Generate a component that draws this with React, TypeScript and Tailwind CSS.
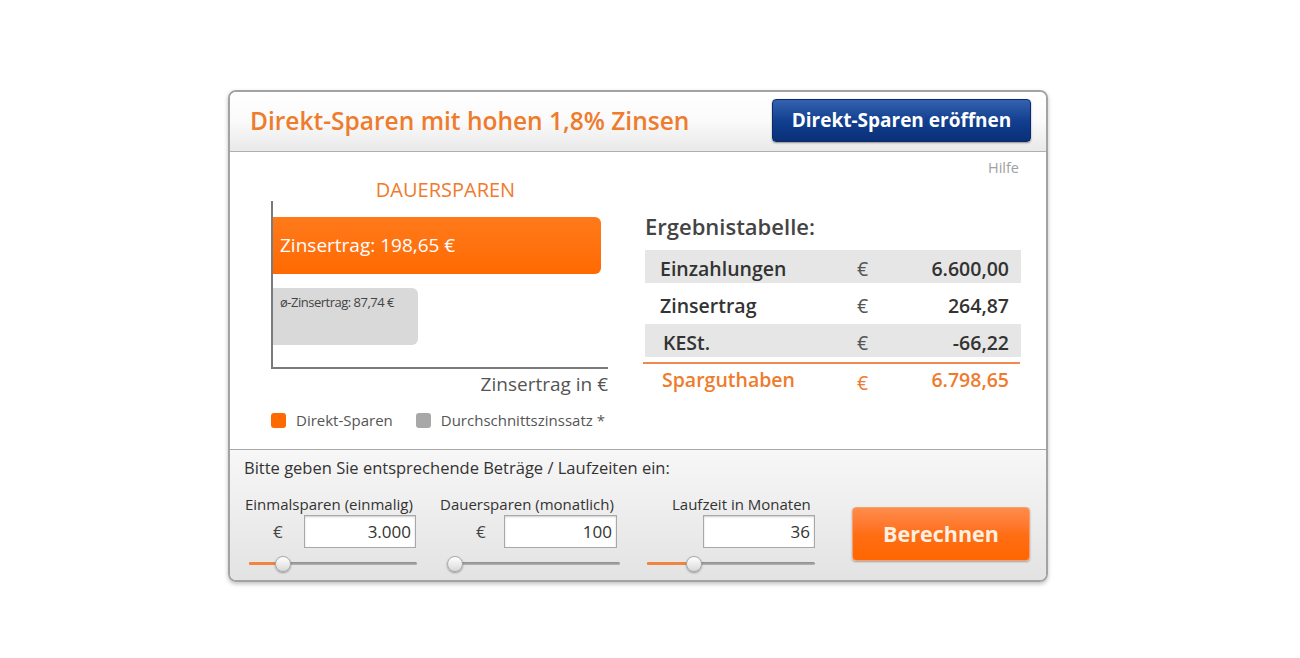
import React from "react";

function Slider({ width, pos, orange }: { width: number; pos: number; orange: boolean }) {
  return (
    <div className="relative h-[16px]" style={{ width }}>
      <div className="absolute left-0 right-0 top-[6px] h-[3px] rounded-full bg-gradient-to-b from-[#8c8c8c] to-[#b5b5b5]" />
      {orange && (
        <div className="absolute left-0 top-[6px] h-[3px] rounded-l-full bg-[#f3843e]" style={{ width: pos }} />
      )}
      <div
        className="absolute top-0 h-[16px] w-[16px] rounded-full border border-[#a9a9a9] bg-gradient-to-b from-white to-[#d9d9d9] shadow-[0_1px_2px_rgba(0,0,0,0.35)]"
        style={{ left: pos - 8 }}
      />
    </div>
  );
}

function Row({ label, value, grey, h, pl = "pl-[15px]" }: { label: string; value: string; grey: boolean; h: string; pl?: string }) {
  return (
    <div className={`flex items-center pt-[5px] ${h} ${grey ? "bg-[#e6e6e6]" : "bg-white"} text-[19.5px] font-semibold text-[#333]`}>
      <span className={`w-[212px] ${pl}`}>{label}</span>
      <span className="font-normal text-[#555]">€</span>
      <span className="ml-auto pr-[12px]">{value}</span>
    </div>
  );
}

const inputCls =
  "h-[33px] border border-[#a8a8a8] bg-white pr-[4px] text-right text-[17px] text-[#333] shadow-[inset_0_1px_2px_rgba(0,0,0,0.2)] outline-none";

export default function App() {
  return (
    <div className="min-h-[658px] w-[1300px] bg-white pl-[228px] pt-[90px] font-['Open_Sans','Noto_Sans',sans-serif]">
      <div className="w-[820px] h-[492px] overflow-hidden rounded-[8px] border-2 border-[#a3a3a3] shadow-[0_2px_4px_rgba(0,0,0,0.25)] flex flex-col">
        {/* header */}
        <div className="flex h-[60px] shrink-0 items-center border-b border-[#b0b0b0] bg-gradient-to-b from-white via-[#fafafa] to-[#e9e9e9] pl-[20px] pr-[15px]">
          <h1 className="text-[24.5px] font-semibold leading-none text-[#ef7b2c]">Direkt-Sparen mit hohen 1,8% Zinsen</h1>
          <button className="ml-auto mt-[-2px] h-[43px] w-[259px] rounded-[4px] border border-[#0b2a6e] bg-gradient-to-b from-[#3462b0] via-[#123f8f] to-[#0a2f78] text-[19px] font-bold text-white shadow-[0_1px_2px_rgba(0,0,0,0.4)]">
            Direkt-Sparen eröffnen
          </button>
        </div>

        {/* body */}
        <div className="flex h-[298px] shrink-0 border-b border-[#a8a8a8] bg-white">
          <div className="w-[415px] pl-[41px] pt-[27px]">
            <div className="h-[22px] w-[337px] pl-[12px] text-center text-[20px] leading-[22px] text-[#ef7b2c]">
              DAUERSPAREN
            </div>
            <div className="h-[168px] w-[337px] border-b-2 border-l-2 border-[#7a7a7a] pt-[16px]">
              <div className="flex h-[57px] w-[328px] items-center rounded-r-[6px] bg-gradient-to-b from-[#ff7a1a] to-[#ff6a00] pl-[7px] text-[19px] text-white">
                Zinsertrag: 198,65 €
              </div>
              <div className="mt-[14px] h-[57px] w-[145px] rounded-r-[6px] bg-[#d9d9d9] pl-[7px] pt-[5px] text-[13px] tracking-[-0.5px] text-[#444]">
                ø-Zinsertrag: 87,74 €
              </div>
            </div>
            <div className="pt-[4px] w-[337px] text-right text-[19px] leading-[22px] text-[#555]">Zinsertrag in €</div>
            <div className="pt-[14px] flex items-center text-[15px] text-[#555]">
              <span className="h-[15px] w-[15px] rounded-[3px] bg-[#ff6a00]" />
              <span className="ml-[10px]">Direkt-Sparen</span>
              <span className="ml-[23px] h-[15px] w-[15px] rounded-[3px] bg-[#a8a8a8]" />
              <span className="ml-[10px]">Durchschnittszinssatz *</span>
            </div>
          </div>
          <div className="flex-1 pr-[25px]">
            <div className="pt-[8px] pr-[2px] text-right text-[14.5px] leading-[16px] text-[#a0a0a0]">Hilfe</div>
            <div className="mt-[37px] text-[22px] font-semibold leading-[26px] text-[#444]">Ergebnistabelle:</div>
            <div className="mt-[11px]">
              <Row label="Einzahlungen" value="6.600,00" grey h="h-[33px]" />
              <Row label="Zinsertrag" value="264,87" grey={false} h="h-[41px]" />
              <Row label="KESt." value="-66,22" grey h="h-[33px]" pl="pl-[18px]" />
            </div>
            <div className="ml-[-2px] mt-[5px] h-[2px] w-[377px] bg-[#f08a4a]" />
            <div className="mt-[4px] flex h-[24px] items-center text-[19.5px] font-semibold text-[#ef7b2c]">
              <span className="w-[212px] pl-[17px]">Sparguthaben</span>
              <span className="pt-[5px] font-normal">€</span>
              <span className="ml-auto pr-[12px]">6.798,65</span>
            </div>
          </div>
        </div>

        {/* footer */}
        <div className="flex-1 bg-gradient-to-b from-[#f7f7f7] to-[#e3e3e3] pl-[14px]">
          <div className="pt-[7px] text-[16.5px] leading-[22px] text-[#333]">
            Bitte geben Sie entsprechende Beträge / Laufzeiten ein:
          </div>
          <div className="mt-[16px] flex pl-[1px]">
            <div className="w-[172px]">
              <div className="text-[15px] leading-[18px] text-[#333]">Einmalsparen (einmalig)</div>
              <div className="mt-[2px] flex items-center">
                <span className="w-[59px] pl-[28px] text-[17px] text-[#444]">€</span>
                <input readOnly value="3.000" className={`${inputCls} w-[112px]`} />
              </div>
              <div className="ml-[4px] mt-[8px]">
                <Slider width={168} pos={34} orange />
              </div>
            </div>
            <div className="ml-[23px] w-[180px]">
              <div className="text-[15px] leading-[18px] text-[#333]">Dauersparen (monatlich)</div>
              <div className="mt-[2px] flex items-center">
                <span className="w-[64px] pl-[36px] text-[17px] text-[#444]">€</span>
                <input readOnly value="100" className={`${inputCls} w-[113px]`} />
              </div>
              <div className="ml-[8px] mt-[8px]">
                <Slider width={172} pos={7} orange={false} />
              </div>
            </div>
            <div className="ml-[27px] w-[168px]">
              <div className="pl-[25px] text-[15px] leading-[18px] text-[#333]">Laufzeit in Monaten</div>
              <div className="mt-[2px] flex items-center">
                <input readOnly value="36" className={`${inputCls} ml-[56px] w-[112px]`} />
              </div>
              <div className="mt-[8px]">
                <Slider width={168} pos={47} orange />
              </div>
            </div>
            <button className="ml-[37px] mt-[12px] h-[54px] w-[178px] rounded-[4px] border border-[#f5a070] bg-gradient-to-b from-[#ff8c4a] via-[#ff6e14] to-[#ff6600] text-[21.5px] font-bold text-[#fff0e2] shadow-[0_1px_2px_rgba(0,0,0,0.3)]">
              Berechnen
            </button>
          </div>
        </div>
      </div>
    </div>
  );
}
